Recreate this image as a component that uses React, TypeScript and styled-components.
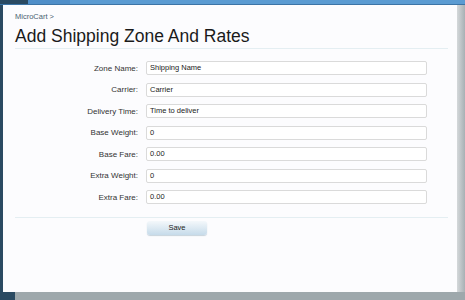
import React from 'react';
import styled, { createGlobalStyle } from 'styled-components';

type Field = {
  label: string,
  value: string
};

const fields: Field[] = [
  { label: 'Zone Name:', value: 'Shipping Name' },
  { label: 'Carrier:', value: 'Carrier' },
  { label: 'Delivery Time:', value: 'Time to deliver' },
  { label: 'Base Weight:', value: '0' },
  { label: 'Base Fare:', value: '0.00' },
  { label: 'Extra Weight:', value: '0' },
  { label: 'Extra Fare:', value: '0.00' }
];

const GlobalStyle = createGlobalStyle`
  html, body {
    margin: 0;
    padding: 0;
    background: #2a4a62;
    font-family: "Liberation Sans", Arial, sans-serif;
  }
`;

const Page = styled.div`
  width: 465px;
  height: 300px;
  display: flex;
  flex-direction: column;
  overflow: hidden;
`;

const TopBar = styled.div`
  height: 5px;
  display: flex;
  border-bottom: 1px solid #3c74a6;
  box-sizing: border-box;
`;

const TopSegment = styled.div<{ $width?: number, $color: string }>`
  width: ${p => (p.$width ? `${p.$width}px` : 'auto')};
  flex: ${p => (p.$width ? '0 0 auto' : '1')};
  background: ${p => p.$color};
`;

const Middle = styled.div`
  flex: 1;
  display: flex;
`;

const LeftStrip = styled.div`
  width: 3px;
  background: #2a4a62;
`;

const Panel = styled.div`
  flex: 1;
  background: #fcfcfe;
  padding: 7px 9px 0 12px;
  display: flex;
  flex-direction: column;
`;

const RightShadow = styled.div`
  width: 8px;
  background: linear-gradient(to right, #d4d8da, #a8b0b4);
`;

const BottomBar = styled.div`
  height: 8px;
  display: flex;
`;

const BottomSegment = styled.div<{ $width?: number, $color: string }>`
  width: ${p => (p.$width ? `${p.$width}px` : 'auto')};
  flex: ${p => (p.$width ? '0 0 auto' : '1')};
  background: ${p => p.$color};
`;

const Breadcrumb = styled.div`
  font-size: 7.5px;
  color: #4a6272;
  line-height: 10px;
`;

const Title = styled.h1`
  margin: 4px 0 0;
  font-size: 17.5px;
  font-weight: normal;
  color: #1a1a1a;
  line-height: 20px;
  padding-bottom: 2px;
  border-bottom: 1px solid #e4eef2;
`;

const Form = styled.div`
  display: flex;
  flex-direction: column;
  gap: 7.5px;
  padding-top: 12px;
  padding-bottom: 13px;
  border-bottom: 1px solid #e4eef2;
`;

const Row = styled.div`
  display: grid;
  grid-template-columns: 123px 281px;
  column-gap: 8px;
  align-items: center;
`;

const Label = styled.label`
  text-align: right;
  font-size: 8px;
  color: #333;
`;

const Input = styled.div`
  height: 14px;
  box-sizing: border-box;
  border: 1px solid #dadada;
  border-radius: 2px;
  background: #fff;
  font-size: 7.5px;
  color: #222;
  line-height: 12px;
  padding-left: 3px;
`;

const Actions = styled.div`
  padding: 3px 0 0 132px;
`;

const Button = styled.div`
  width: 60px;
  height: 14px;
  border-radius: 3px;
  background: linear-gradient(to bottom, #f4f8fb, #c6dbea);
  box-shadow: 0 1px 1px rgba(120, 150, 170, 0.4);
  font-size: 7.5px;
  color: #222;
  text-align: center;
  line-height: 14px;
`;

const App: React.FC = () => {
  return (
    <Page>
      <GlobalStyle />
      <TopBar>
        <TopSegment $width={28} $color="#2a4a62" />
        <TopSegment $width={42} $color="#4f8ec8" />
        <TopSegment $color="#5b9bd2" />
      </TopBar>
      <Middle>
        <LeftStrip />
        <Panel>
          <Breadcrumb>MicroCart &gt;</Breadcrumb>
          <Title>Add Shipping Zone And Rates</Title>
          <Form>
            {fields.map(f => (
              <Row key={f.label}>
                <Label>{f.label}</Label>
                <Input>{f.value}</Input>
              </Row>
            ))}
          </Form>
          <Actions>
            <Button>Save</Button>
          </Actions>
        </Panel>
        <RightShadow />
      </Middle>
      <BottomBar>
        <BottomSegment $width={15} $color="#2a4a62" />
        <BottomSegment $color="#9ea8ac" />
      </BottomBar>
    </Page>
  );
};

export default App;
